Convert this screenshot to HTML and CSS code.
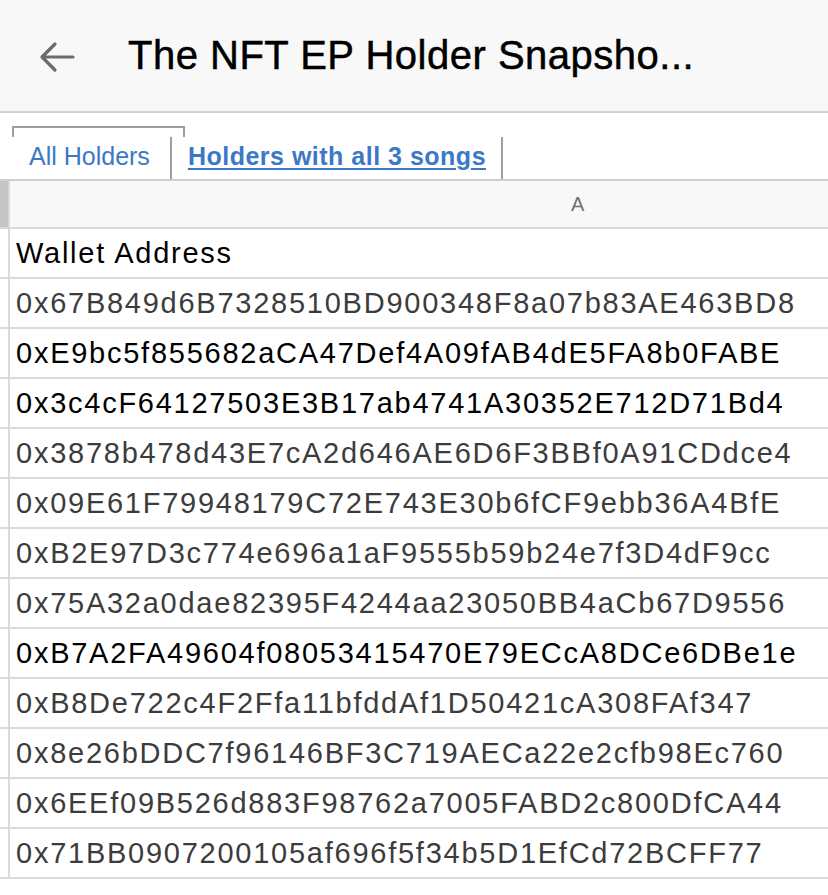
FILE: index.html
```html
<!DOCTYPE html>
<html lang="en">
<head>
    <meta charset="UTF-8">
    <meta name="viewport" content="width=device-width, initial-scale=1.0">
    <title>The NFT EP Holder Snapshot</title>
    <link rel="stylesheet" href="styles.css">
</head>
<body>
    <header class="top-bar">
        <button class="back-btn" aria-label="Back">
            <svg width="36" height="32" viewBox="0 0 36 32">
                <path d="M34 16H4M16 3L3 16l13 13" fill="none" stroke="#6b6b6b" stroke-width="3.2" stroke-linecap="round" stroke-linejoin="round"/>
            </svg>
        </button>
        <h1 class="doc-title">The NFT EP Holder Snapsho...</h1>
    </header>

    <nav class="sheet-tabs">
        <div class="tab tab-active">All Holders</div>
        <a class="tab tab-link" href="#">Holders with all 3 songs</a>
    </nav>

    <div class="sheet">
        <div class="row col-head">
            <div class="row-num"></div>
            <div class="cell">A</div>
        </div>
        <div id="rows"></div>
    </div>

    <script>
        // Sheet data: [address, dimmed?]
        const rows = [
            ['Wallet Address', false],
            ['0x67B849d6B7328510BD900348F8a07b83AE463BD8', true],
            ['0xE9bc5f855682aCA47Def4A09fAB4dE5FA8b0FABE', false],
            ['0x3c4cF64127503E3B17ab4741A30352E712D71Bd4', false],
            ['0x3878b478d43E7cA2d646AE6D6F3BBf0A91CDdce4', true],
            ['0x09E61F79948179C72E743E30b6fCF9ebb36A4BfE', true],
            ['0xB2E97D3c774e696a1aF9555b59b24e7f3D4dF9cc', true],
            ['0x75A32a0dae82395F4244aa23050BB4aCb67D9556', true],
            ['0xB7A2FA49604f08053415470E79ECcA8DCe6DBe1e', false],
            ['0xB8De722c4F2Ffa11bfddAf1D50421cA308FAf347', true],
            ['0x8e26bDDC7f96146BF3C719AECa22e2cfb98Ec760', true],
            ['0x6EEf09B526d883F98762a7005FABD2c800DfCA44', true],
            ['0x71BB0907200105af696f5f34b5D1EfCd72BCFF77', true]
        ];

        const container = document.getElementById('rows');
        rows.forEach(([text, dim]) => {
            const row = document.createElement('div');
            row.className = 'row';
            row.innerHTML = `
                <div class="row-num"></div>
                <div class="cell${dim ? ' dim' : ''}">${text}</div>
            `;
            container.appendChild(row);
        });
    </script>
</body>
</html>
```

FILE: styles.css
```css
* {
    box-sizing: border-box;
    margin: 0;
    padding: 0;
}

body {
    font-family: "Liberation Sans", Arial, sans-serif;
    background-color: #fff;
    color: #000;
    width: 828px;
    overflow: hidden;
}

.top-bar {
    height: 113px;
    background: #f8f8f8;
    border-bottom: 2px solid #d2d2d2;
    display: flex;
    align-items: center;
    padding-left: 39px;
}

.back-btn {
    background: none;
    border: none;
    width: 36px;
    height: 32px;
    display: flex;
    margin-top: 2px;
}

.doc-title {
    margin-left: 53px;
    font-size: 40px;
    font-weight: normal;
    -webkit-text-stroke: 0.5px #000;
    letter-spacing: 0.5px;
    white-space: nowrap;
}

.sheet-tabs {
    height: 68px;
    display: flex;
    align-items: flex-end;
    padding-left: 12px;
    border-bottom: 2px solid #cfcfcf;
}

.tab {
    position: relative;
    height: 42px;
    display: flex;
    align-items: center;
    padding-bottom: 3px;
    border-right: 2px solid #9e9e9e;
    font-size: 25px;
    color: #3b78c7;
    white-space: nowrap;
}

.tab-active {
    padding-left: 17px;
    padding-right: 20px;
}

/* bracket above the selected tab */
.tab-active::before {
    content: "";
    box-sizing: border-box;
    position: absolute;
    left: 0;
    top: -11px;
    width: 173px;
    height: 11px;
    border: 2px solid #9e9e9e;
    border-bottom: none;
}

.tab-link {
    padding-left: 16px;
    padding-right: 15px;
    font-weight: bold;
    letter-spacing: 0.5px;
    text-decoration: underline;
    text-underline-offset: 3px;
}

.row {
    display: flex;
    height: 50px;
    border-bottom: 2px solid #dadada;
}

.row-num {
    width: 10px;
    flex-shrink: 0;
    border-right: 2px solid #dadada;
}

.cell {
    flex: 1;
    min-width: 0;
    display: flex;
    align-items: center;
    padding-left: 6px;
    padding-top: 1px;
    font-size: 29px;
    letter-spacing: 1.75px;
    white-space: nowrap;
    overflow: hidden;
    color: #000;
}

.cell.dim {
    color: #3c3c3c;
}

.col-head {
    height: 48px;
    background: #f8f8f8;
}

.col-head .row-num {
    background: #c6c6c6;
}

/* column A runs past the right edge, so its label sits right of centre */
.col-head .cell {
    padding-left: 561px;
    font-size: 20px;
    letter-spacing: 0;
    color: #707070;
}
```
